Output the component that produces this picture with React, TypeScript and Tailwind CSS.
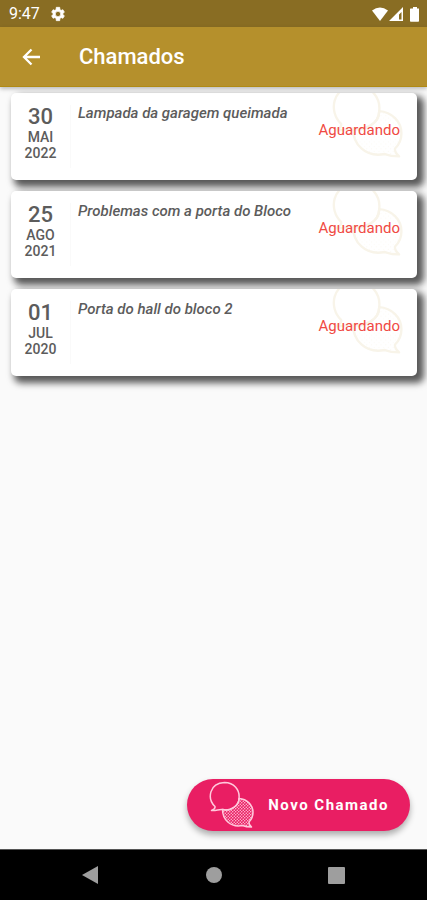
import React from "react";

type Ticket = { day: string; month: string; year: string; title: string; status: string };

const tickets: Ticket[] = [
  { day: "30", month: "MAI", year: "2022", title: "Lampada da garagem queimada", status: "Aguardando" },
  { day: "25", month: "AGO", year: "2021", title: "Problemas com a porta do Bloco", status: "Aguardando" },
  { day: "01", month: "JUL", year: "2020", title: "Porta do hall do bloco 2", status: "Aguardando" },
];

function Bubbles({ className, id, dot = 0.75 }: { className: string; id: string; dot?: number }) {
  return (
    <svg viewBox="0 0 46 48" className={className} fill="none" stroke="currentColor" strokeWidth="1.500" strokeLinejoin="round" aria-hidden="true">
      <defs>
        <pattern id={id} width="3" height="3" patternUnits="userSpaceOnUse">
          <circle cx="0.75" cy="0.75" r={dot} fill="currentColor" stroke="none" />
          <circle cx="2.25" cy="2.25" r={dot} fill="currentColor" stroke="none" />
        </pattern>
      </defs>
      <path d="M7 25.500C-1 18 1 2 16.500 1.500C26 1.500 32 9 31 17.500C31 25 22 30.500 14.500 28.500C11 28 8 30 3.500 29.500C6 28.500 7.500 27.500 7 25.500Z" />
      <path d="M14.500 28.500C22 30.500 31 25 31 17.500C39 18 45 24 45 31.500C45 36 43.500 38.500 41 41C40.500 43 42 44.500 43.500 46C39.500 46 37 45.500 34.500 44.500C22 47 14.500 38 14.500 28.500Z" fill={`url(#${id})`} />
    </svg>
  );
}

function TicketCard({ ticket }: { ticket: Ticket }) {
  return (
    <li className="relative flex h-[87px] rounded-[5px] bg-white shadow-[5px_5px_7px_2px_#585858]">
      <div className="absolute inset-0 overflow-hidden rounded-[5px]">
        <Bubbles id={`dots-${ticket.year}`} dot={0.3} className="absolute -top-2.5 right-3.5 h-[77px] w-[73px] text-[#b5902c] opacity-10" />
      </div>
      <time className="my-3 flex w-[60px] shrink-0 flex-col items-center border-r border-[#fafafa] text-[#5c5c5c]">
        <span className="text-[22px] leading-6 font-medium">{ticket.day}</span>
        <span className="text-[14px] leading-4 font-medium">{ticket.month}</span>
        <span className="text-[14px] leading-4 font-medium">{ticket.year}</span>
      </time>
      <h2 className="min-w-0 grow pt-2.5 pl-[7px] text-[15px] leading-5 font-medium text-[#5c5c5c] italic">{ticket.title}</h2>
      <p className="relative shrink-0 pt-[27px] pr-[17px] text-[15px] leading-5 text-[#f04a43]">{ticket.status}</p>
    </li>
  );
}

export default function App() {
  return (
    <div className="flex min-h-screen flex-col bg-[#fafafa] font-[Roboto,sans-serif]">
      <div className="flex h-[27px] items-center bg-[#896d23] pr-1.5 pl-[9px] text-white">
        <span className="text-[16px] leading-5">9:47</span>
        <svg viewBox="0 0 24 24" className="ml-2.5 size-4" fill="currentColor" stroke="currentColor" aria-hidden="true">
          <path fillRule="evenodd" d="M19.400 13a7.500 7.500 0 0 0 0-2l2.200-1.700-2.200-3.800-2.600 1a8 8 0 0 0-1.800-1L14.600 2H9.400L9 5.500a8 8 0 0 0-1.800 1l-2.600-1-2.200 3.800L4.600 11a7.500 7.500 0 0 0 0 2l-2.200 1.700 2.200 3.800 2.600-1a8 8 0 0 0 1.800 1l.4 3.500h5.200l.4-3.500a8 8 0 0 0 1.800-1l2.600 1 2.200-3.800zM12 16a4 4 0 1 1 0-8 4 4 0 0 1 0 8z" />
        </svg>
        <svg viewBox="0 0 50 16" className="ml-auto h-4 w-[50px]" fill="currentColor" aria-hidden="true">
          <path d="M1 4.500Q9 -1.500 17 4.500L9 15Z" />
          <path fillRule="evenodd" d="M32 1V15H18ZM30.500 6V13.500H28V8.500Z" />
          <path d="M40 2.500h2V1h4v1.500h2V15a.8.8 0 0 1-.8.800h-7.400a.8.8 0 0 1-.8-.8V3.300a.8.8 0 0 1 1-.8z" />
        </svg>
      </div>
      <header className="relative z-10 flex h-[60px] items-center border-b border-[#b08a14] bg-[#b5902c] pl-[19px] text-white shadow-[0_2px_4px_#00000040]">
        <button type="button" aria-label="Voltar" className="flex size-6 items-center justify-center">
          <svg viewBox="0 0 24 24" className="size-6" fill="none" stroke="currentColor" strokeWidth="2.300" aria-hidden="true">
            <path d="M21 12H5M12.500 4.500l-7.500 7.500 7.500 7.500" />
          </svg>
        </button>
        <h1 className="ml-9 text-[22px] leading-7 font-medium">Chamados</h1>
      </header>
      <main className="flex grow flex-col px-2.5 pt-1.5 pb-[18px]">
        <ul className="flex flex-col gap-[11px] pl-px">
          {tickets.map((t) => (
            <TicketCard key={t.year} ticket={t} />
          ))}
        </ul>
        <button type="button" className="mt-auto mr-[7px] flex h-[52px] items-center self-end rounded-full bg-[#e91e63] px-[21px] text-white shadow-[0_4px_6px_#00000050]">
          <Bubbles id="dots-new" className="mr-3.5 h-12 w-[46px] text-[#ffc9dc]" />
          <span className="text-[15px] leading-5 font-bold tracking-widest">Novo Chamado</span>
        </button>
      </main>
      <nav className="flex h-[51px] items-center justify-between border-t border-[#555] bg-black pr-[82px] pl-[81px] text-[#9e9e9e]">
        <button type="button" aria-label="Voltar ao anterior">
          <svg viewBox="0 0 18 20" className="h-5 w-[18px]" fill="currentColor" aria-hidden="true"><path d="M17 1v18L1 10z" /></svg>
        </button>
        <button type="button" aria-label="Início" className="size-4 rounded-full bg-[#9e9e9e]" />
        <button type="button" aria-label="Recentes" className="size-[17px] rounded-[1px] bg-[#9e9e9e]" />
      </nav>
    </div>
  );
}
